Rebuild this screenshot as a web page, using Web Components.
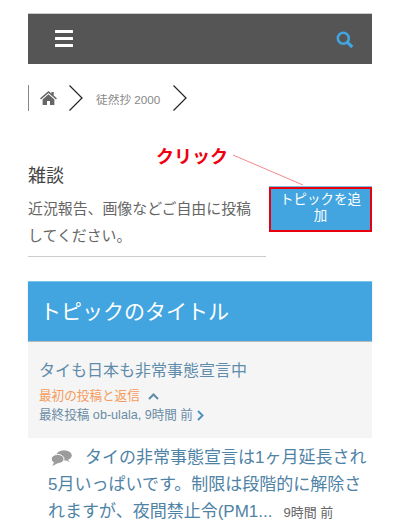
<!DOCTYPE html>
<html lang="ja"><head><meta charset="utf-8"><title>雑談</title>
<style>
html,body{margin:0;background:#fff;height:528px;overflow:hidden}
body{font-family:"Liberation Sans","Noto Sans CJK JP",sans-serif;position:relative}
app-page{display:block}
</style></head><body>
<app-page>
  <site-nav></site-nav>
  <bread-crumb>徒然抄 2000</bread-crumb>
  <forum-intro title-text="雑談">近況報告、画像などご自由に投稿<br>してください。</forum-intro>
  <topic-list heading="トピックのタイトル">
    <topic-card title-text="タイも日本も非常事態宣言中"></topic-card>
    <topic-excerpt time="9時間 前">タイの非常事態宣言は1ヶ月延長され<br>5月いっぱいです。制限は段階的に解除さ<br>れますが、夜間禁止令(PM1...</topic-excerpt>
  </topic-list>
</app-page>
<click-note></click-note>
<script>
function def(name,html){customElements.define(name,class extends HTMLElement{
  constructor(){super();this.attachShadow({mode:'open'}).innerHTML=html(this);}
  connectedCallback(){this.shadowRoot.querySelectorAll('[data-attr]').forEach(e=>{e.textContent=this.getAttribute(e.dataset.attr)||''})}
});}
def('app-page',()=>`<style>:host{display:block;padding:13px 28px 0}</style><slot></slot>`);
def('site-nav',()=>`<style>
:host{display:flex;align-items:center;justify-content:space-between;height:51px;background:#555;padding:0 18px 0 27px;box-sizing:border-box;border-top:1px solid #ccc}
.b{display:flex;flex-direction:column;gap:4px;width:18px;margin-top:-1px}.b i{display:block;height:3px;background:#fff;border-radius:.5px}
svg{display:block;margin-top:2px}
</style><div class="b"><i></i><i></i><i></i></div>
<svg width="18" height="18" viewBox="0 0 18 18" fill="none" stroke="#42a5e0"><circle cx="7.3" cy="7.3" r="5.5" stroke-width="2.6"/><path d="M11.4 11.4 16.3 16" stroke-width="3.2"/></svg>`);
def('bread-crumb',()=>`<style>
:host{display:flex;align-items:center;height:26px;margin-top:21px;border-left:1px solid #888;font-size:11.7px;color:#888}
svg{display:block;flex:none}.home{margin-left:11px}.c1{margin-left:12px}.t{margin-left:13px;white-space:nowrap}.c2{margin-left:13px}
</style>
<svg class="home" width="17" height="14" viewBox="0 0 18 15" fill="#666"><path d="M9 0 12.2 2.7V1H14.6V4.8L18 7.8 17 9 9 2.2 1 9 0 7.8Z"/><path d="M9 3.6 15.3 9V15H10.6V10.6H7.4V15H2.7V9Z"/></svg>
<svg class="c1" width="14" height="26" viewBox="0 0 14 26" fill="none" stroke="#222" stroke-width="1.2"><path d="M.5 .5 13 13 .5 25.5"/></svg>
<span class="t"><slot></slot></span>
<svg class="c2" width="14" height="26" viewBox="0 0 14 26" fill="none" stroke="#222" stroke-width="1.2"><path d="M.5 .5 13 13 .5 25.5"/></svg>`);
def('forum-intro',()=>`<style>
:host{display:flex;align-items:flex-end;gap:3px;margin-top:52px;color:#555}
.l{width:238px;flex:none;border-bottom:1px solid #ccc;padding-bottom:6px}
h2{margin:0 0 7px;font-weight:400;font-size:18px;line-height:26px;color:#444}
p{margin:0;font-size:14.9px;line-height:27px;color:#666}
.btn{flex:none;width:103px;height:45px;box-sizing:border-box;margin-bottom:25px;background:#42a5e0;border:2px solid #e8000f;color:#fff;font-size:13.5px;line-height:16px;text-align:center;padding:3px 4px;box-shadow:0 -1px 0 #7cc3ea}
</style><div class="l"><h2 data-attr="title-text"></h2><p><slot></slot></p></div><div class="btn">トピックを追加</div>`);
def('topic-list',()=>`<style>
:host{display:block;margin-top:24px}
h3{margin:0;height:60px;box-sizing:border-box;background:#42a5e0;color:#fff;font-weight:400;font-size:21px;line-height:60px;padding-left:12px;box-shadow:0 1px 1px #bbb;border-top:1px solid #7cc3ea}
</style><h3 data-attr="heading"></h3><slot></slot>`);
def('topic-card',()=>`<style>
:host{display:block;margin-top:2px;height:95px;box-sizing:border-box;background:#f5f5f5;padding:16px 11px 0;font-size:12.6px;line-height:20px;color:#6a8ca5}
.t{font-size:16px;line-height:24px;color:#5f8cab;margin-bottom:3px}
.o{color:#f79a5a;display:flex;align-items:center;gap:8px}
.m{display:flex;align-items:center;gap:4px;line-height:19px;margin-top:0}
svg{display:block}
</style><div class="t" data-attr="title-text"></div>
<div class="o">最初の投稿と返信<svg width="11" height="7" viewBox="0 0 11 7" fill="none" stroke="#5f8cab" stroke-width="2"><path d="M1 6 5.5 1.5 10 6"/></svg></div>
<div class="m">最終投稿 ob-ulala, 9時間 前<svg width="7" height="11" viewBox="0 0 7 11" fill="none" stroke="#4f93c0" stroke-width="2"><path d="M1 1 5.5 5.5 1 10"/></svg></div>`);
def('topic-excerpt',(h)=>`<style>
:host{display:block;padding:6px 0 0 20px;font-size:17px;line-height:27px;color:#4f83a6;white-space:nowrap}
.i{display:inline-block;vertical-align:-3px;margin:0 13px 0 3px}
svg{display:block}
.time{font-size:13px;color:#666;margin-left:11px}
</style><span class="i"><svg width="21" height="16" viewBox="0 0 21 16" fill="#9b9b9b"><ellipse cx="13" cy="5.4" rx="7.8" ry="5.2"/><path d="M16 9 19 12 14 10Z"/><ellipse cx="6.6" cy="9" rx="6.4" ry="4.6" stroke="#fff" stroke-width="1"/><path d="M3 12 1.5 16 7 13Z"/></svg></span><slot></slot><span class="time" data-attr="time"></span>`);
def('click-note',()=>`<style>
:host{position:absolute;left:0;top:0;width:400px;height:528px;pointer-events:none;display:block}
span{position:absolute;left:156px;top:146px;font-size:18px;line-height:22px;font-weight:700;color:#f0000f;white-space:nowrap}
svg{position:absolute;left:0;top:0}
</style><span>クリック</span><svg width="400" height="528"><path d="M233 155 303 185" stroke="#f26a6a" stroke-width=".8" fill="none"/></svg>`);
</script>
</body></html>
